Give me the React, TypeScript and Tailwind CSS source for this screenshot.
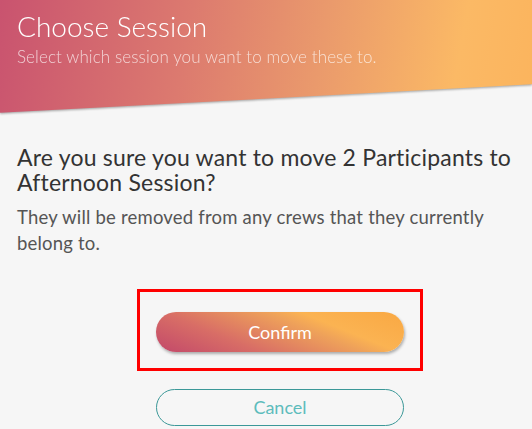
import React from "react";

export default function App() {
  return (
    <div className="w-[532px] h-[429px] overflow-hidden bg-[#f6f6f6] font-['Lato','Noto_Sans',sans-serif]">
      <div className="relative h-[114px] [filter:drop-shadow(0_1px_1px_rgba(0,0,0,0.35))]">
        <div className="h-full [clip-path:polygon(0_0,100%_0,100%_74%,0_99%)] bg-[linear-gradient(100deg,#c9536f_0%,#dc7a6f_35%,#ea9a6c_60%,#fbb965_85%,#fbb45d_100%)] px-[17px] pt-[8px]">
          <div className="text-[28px] leading-[36px] font-light text-white">Choose Session</div>
          <div className="text-[17px] leading-[22px] font-light text-white/70 mt-[2px] tracking-[0.1px]">
            Select which session you want to move these to.
          </div>
        </div>
      </div>
      <div className="pl-[17px] pr-[10px] pt-[31px]">
        <div className="text-[23px] leading-[25px] text-[#333333] tracking-[0.2px]">
          Are you sure you want to move 2 Participants to Afternoon Session?
        </div>
        <div className="text-[18.5px] leading-[26px] text-[#555555] mt-[9px] pr-[30px] tracking-[0.2px]">
          They will be removed from any crews that they currently belong to.
        </div>
      </div>
      <div className="flex flex-col items-start mt-[33px] pl-[137px]">
        <div className="w-[286px] h-[82px] border-[3px] border-[#ff0000] flex justify-center pt-[20px]">
          <button className="w-[248px] h-[40px] rounded-full text-white text-[18px] bg-[linear-gradient(22deg,#c2486a_0%,#d86d66_30%,#eea15a_60%,#fbb352_70%,#f9a843_100%)] shadow-[1px_2px_3px_rgba(0,0,0,0.3)]">
            Confirm
          </button>
        </div>
        <button className="mt-[18px] ml-[19px] w-[248px] h-[37px] rounded-full border border-[#3b9898] text-[#5dbcbc] text-[18px] bg-transparent">
          Cancel
        </button>
      </div>
    </div>
  );
}
